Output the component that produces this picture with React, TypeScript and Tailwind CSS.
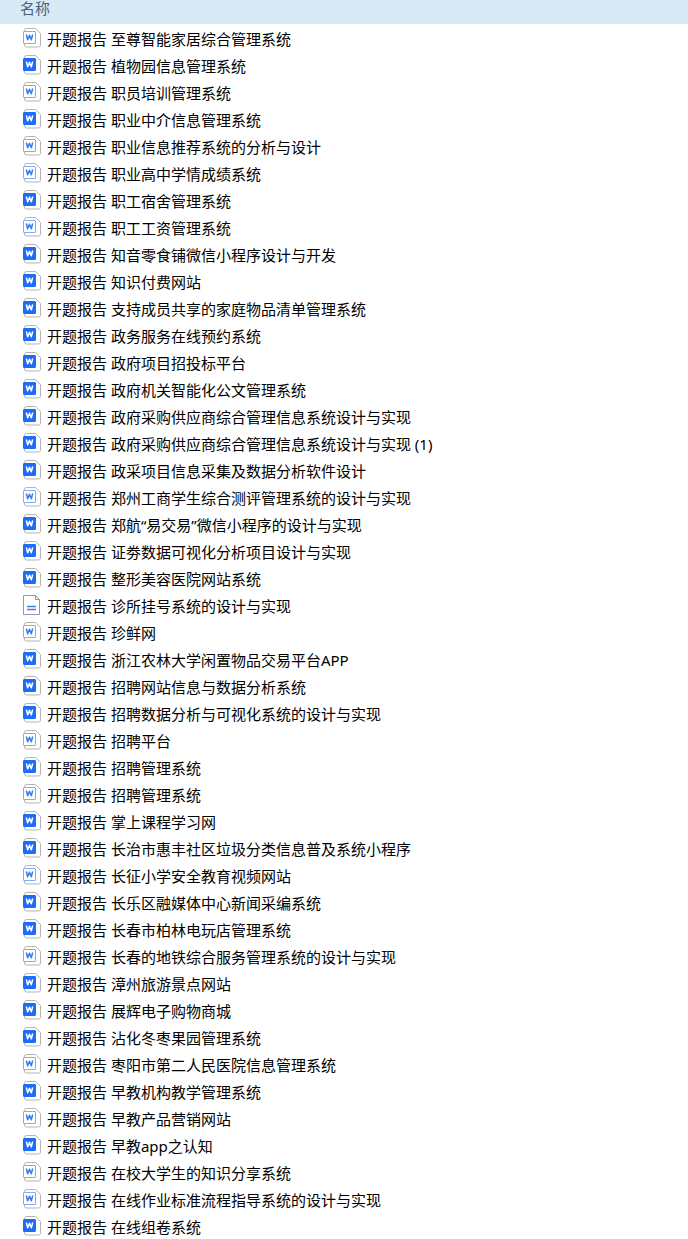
type Kind = "doc" | "docx" | "text";

const files: { name: string; kind: Kind }[] = [
  { name: "至尊智能家居综合管理系统", kind: "doc" },
  { name: "植物园信息管理系统", kind: "docx" },
  { name: "职员培训管理系统", kind: "doc" },
  { name: "职业中介信息管理系统", kind: "docx" },
  { name: "职业信息推荐系统的分析与设计", kind: "doc" },
  { name: "职业高中学情成绩系统", kind: "doc" },
  { name: "职工宿舍管理系统", kind: "docx" },
  { name: "职工工资管理系统", kind: "doc" },
  { name: "知音零食铺微信小程序设计与开发", kind: "docx" },
  { name: "知识付费网站", kind: "docx" },
  { name: "支持成员共享的家庭物品清单管理系统", kind: "docx" },
  { name: "政务服务在线预约系统", kind: "docx" },
  { name: "政府项目招投标平台", kind: "docx" },
  { name: "政府机关智能化公文管理系统", kind: "docx" },
  { name: "政府采购供应商综合管理信息系统设计与实现", kind: "docx" },
  { name: "政府采购供应商综合管理信息系统设计与实现 (1)", kind: "docx" },
  { name: "政采项目信息采集及数据分析软件设计", kind: "docx" },
  { name: "郑州工商学生综合测评管理系统的设计与实现", kind: "doc" },
  { name: "郑航“易交易”微信小程序的设计与实现", kind: "docx" },
  { name: "证劵数据可视化分析项目设计与实现", kind: "docx" },
  { name: "整形美容医院网站系统", kind: "docx" },
  { name: "诊所挂号系统的设计与实现", kind: "text" },
  { name: "珍鲜网", kind: "doc" },
  { name: "浙江农林大学闲置物品交易平台APP", kind: "docx" },
  { name: "招聘网站信息与数据分析系统", kind: "docx" },
  { name: "招聘数据分析与可视化系统的设计与实现", kind: "docx" },
  { name: "招聘平台", kind: "doc" },
  { name: "招聘管理系统", kind: "docx" },
  { name: "招聘管理系统", kind: "doc" },
  { name: "掌上课程学习网", kind: "docx" },
  { name: "长治市惠丰社区垃圾分类信息普及系统小程序", kind: "docx" },
  { name: "长征小学安全教育视频网站", kind: "doc" },
  { name: "长乐区融媒体中心新闻采编系统", kind: "docx" },
  { name: "长春市柏林电玩店管理系统", kind: "docx" },
  { name: "长春的地铁综合服务管理系统的设计与实现", kind: "doc" },
  { name: "漳州旅游景点网站", kind: "docx" },
  { name: "展辉电子购物商城", kind: "docx" },
  { name: "沾化冬枣果园管理系统", kind: "docx" },
  { name: "枣阳市第二人民医院信息管理系统", kind: "doc" },
  { name: "早教机构教学管理系统", kind: "docx" },
  { name: "早教产品营销网站", kind: "doc" },
  { name: "早教app之认知", kind: "docx" },
  { name: "在校大学生的知识分享系统", kind: "doc" },
  { name: "在线作业标准流程指导系统的设计与实现", kind: "doc" },
  { name: "在线组卷系统", kind: "docx" },
];

function FileIcon({ kind }: { kind: Kind }) {
  if (kind === "text") {
    return (
      <svg viewBox="0 0 20 20" className="size-5 shrink-0" fill="none" aria-hidden="true">
        <path d="M1.5.5h12l4 4v15h-16z" fill="#fff" stroke="#999" />
        <path d="M13.5.5v4h4" stroke="#999" />
        <path d="M5 11.5h9M5 14.5h9" stroke="#3b82f0" strokeWidth="1.3" />
      </svg>
    );
  }

  const solid = kind === "docx";
  return (
    <svg viewBox="0 0 20 20" className="size-5 shrink-0" fill="none" aria-hidden="true">
      <path
        d="M4.5.5h9l5 5V17a2 2 0 0 1-2 2h-12a2 2 0 0 1-2-2V2.5a2 2 0 0 1 2-2z"
        fill="#fff"
        stroke="#b4b4b4"
      />
      <rect
        x="1.5"
        y="3.5"
        width="12"
        height="12"
        rx="0.5"
        fill={solid ? "#1c6cf5" : "#fff"}
        stroke={solid ? "#1c6cf5" : "#7fabf7"}
      />
      <path
        d="M4.3 6.5l1.4 5.3 1.8-4.6 1.8 4.600 1.400-5.300"
        stroke={solid ? "#fff" : "#3b7df0"}
        strokeWidth="1.5"
        strokeLinejoin="round"
      />
    </svg>
  );
}

export default function App() {
  return (
    <main className="min-h-screen bg-white font-['Noto_Sans','Noto_Sans_CJK_SC',sans-serif] text-[15px] text-black">
      <table className="w-full border-collapse">
        <thead>
          <tr className="bg-[#d9eaf7]">
            <th className="h-6 px-5 pb-2 text-left leading-4 font-normal text-[#4c607a]">名称</th>
          </tr>
        </thead>
        <tbody>
          {files.map((file, i) => (
            <tr key={i}>
              <td className="p-0">
                <div className="flex h-[27px] items-start gap-[5px] pt-1 pl-[22px] whitespace-nowrap">
                  <FileIcon kind={file.kind} />
                  <span className="leading-[23px]">开题报告 {file.name}</span>
                </div>
              </td>
            </tr>
          ))}
        </tbody>
      </table>
    </main>
  );
}
